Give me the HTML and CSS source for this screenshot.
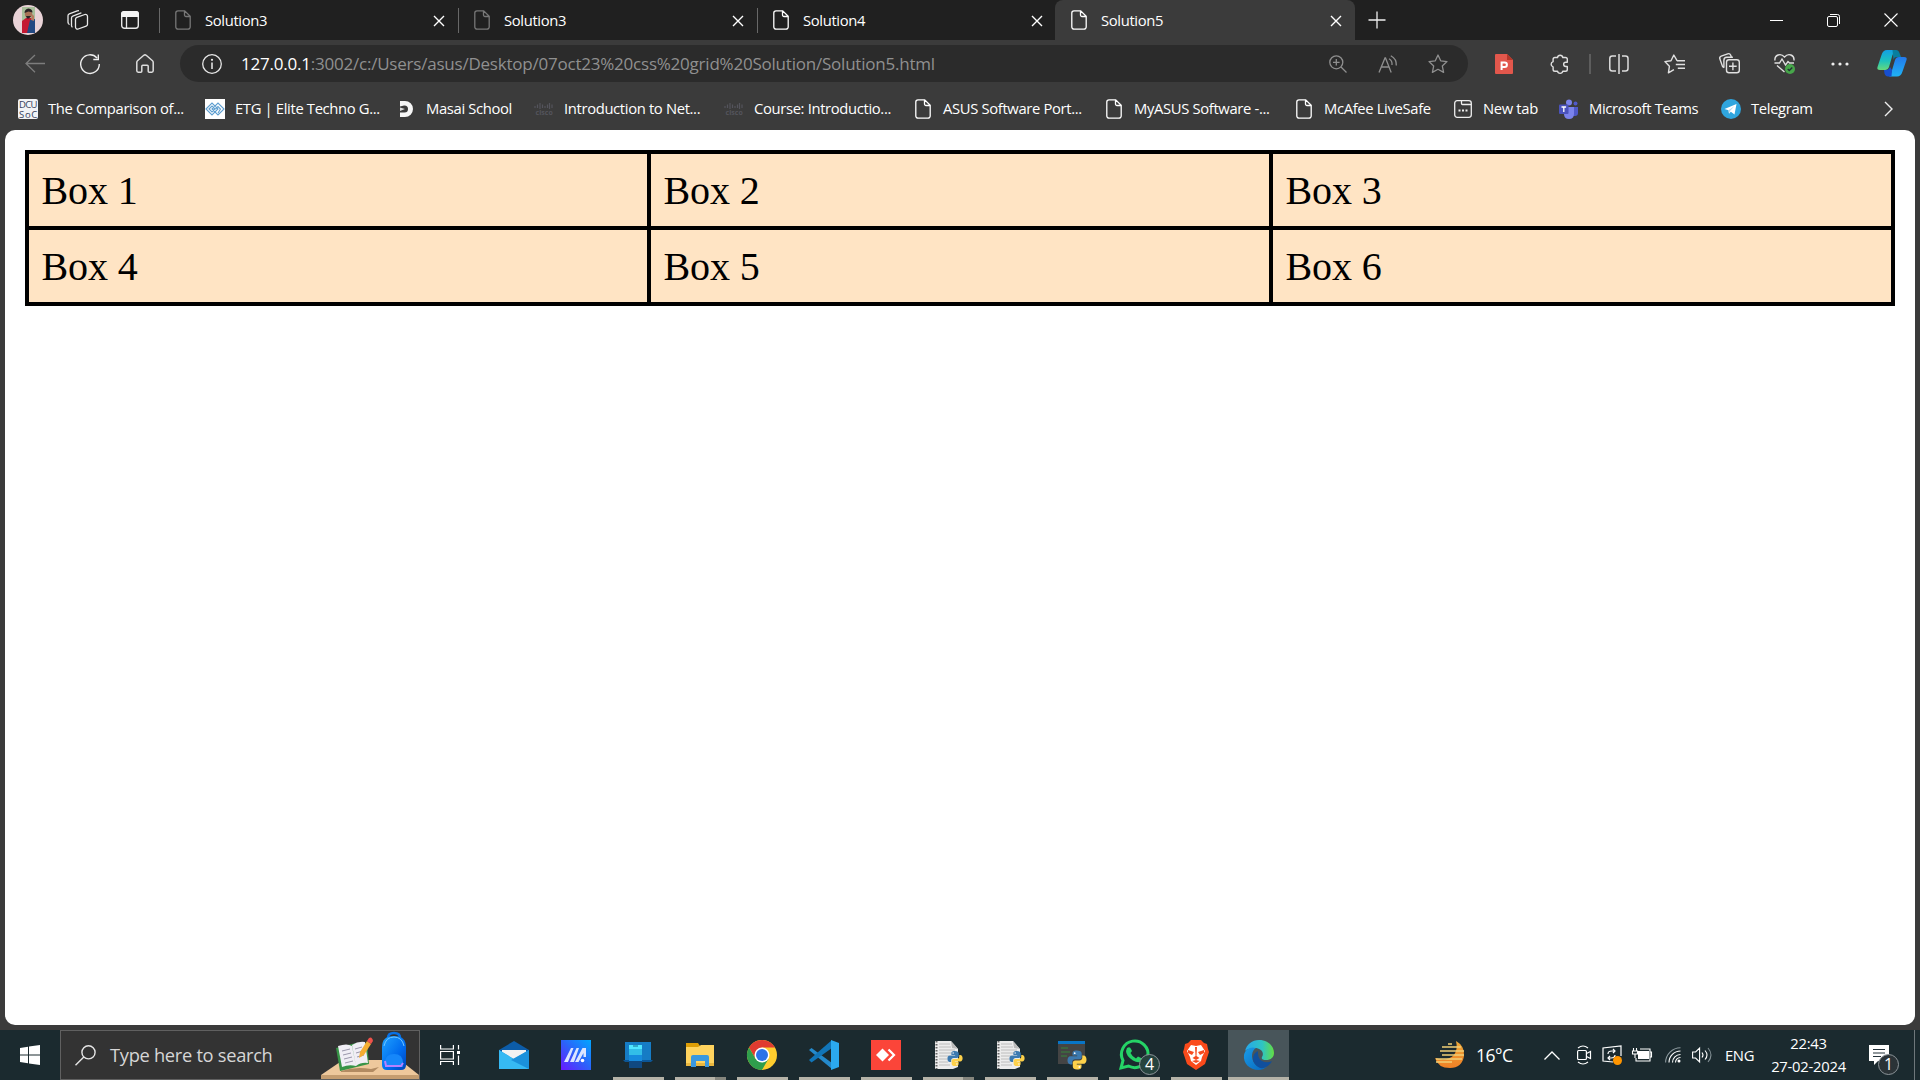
FILE: index.html
```html
<!DOCTYPE html>
<html lang="en">
<head>
<meta charset="utf-8">
<title>Solution5</title>
<link rel="stylesheet" href="styles.css">
</head>
<body>
<svg class="defs" width="0" height="0">
  <defs>
    <symbol id="file" viewBox="0 0 16 20"><path d="M3 .8H9.700L15.200 6.300V17a2.200 2.200 0 0 1-2.200 2.200H3A2.200 2.200 0 0 1 .8 17V3A2.200 2.200 0 0 1 3 .8ZM9.500 1V5a1.500 1.500 0 0 0 1.500 1.500h4" fill="none" stroke="currentColor" stroke-width="1.300"/></symbol>
    <symbol id="close" viewBox="0 0 12 12"><path d="M1 1l10 10M11 1L1 11" stroke="currentColor" stroke-width="1.400"/></symbol>
    <symbol id="cisco" viewBox="0 0 20 20"><path d="M1 7v2M3.500 5.500V9M6 4v6M8.500 5.500V9M11 7v2M13.500 5.500V9M15.500 4v6M18 5.500V9" stroke="#54545c" stroke-width="1.200"/><text x="10" y="16" font-size="7" font-weight="700" fill="#54545c" text-anchor="middle" textLength="17">cisco</text></symbol>
    <symbol id="py" viewBox="0 0 20 20"><path d="M9.800.5c-4 0-4.300 1.700-4.300 3v2h4.700v.8H3.500C1.500 6.300.5 8 .5 10.300s1 4.200 3 4.200h1.700v-2.300c0-1.600 1.300-2.900 2.900-2.900h4.300c1.300 0 2.300-1 2.300-2.300V3.500c0-1.800-1.700-3-4.900-3Z" fill="#3c7ab0"/><path d="M10.200 19.500c4 0 4.300-1.700 4.300-3v-2H9.800v-.8h6.700c2 0 3-1.700 3-4s-1-4.200-3-4.200h-1.200v2.300c0 1.600-1.300 2.700-2.900 2.700H8.100c-1.300 0-2.300 1-2.300 2.300v3.700c0 1.800 1.400 3 4.400 3Z" fill="#fdd14a"/><circle cx="7.700" cy="3.200" r=".9" fill="#fff"/><circle cx="12.400" cy="16.900" r=".9" fill="#fff"/></symbol>
    <symbol id="pyfile" viewBox="0 0 30 30"><path d="M2 1h16l7 8v18l-5 2H2Z" fill="#ececec"/><path d="M18 1l1 7 6 1Z" fill="#bbb"/><path d="M3.500 1v28" stroke="#666" stroke-width="2" stroke-dasharray="1.500 1.500"/><path d="M6 4h11M6 7h12M6 10h16M6 13h16M6 16h10M6 19h8M6 22h9M6 25h11" stroke="#b9b9b9" stroke-width=".9"/><use href="#py" x="14" y="10" width="16" height="17"/></symbol>
    <linearGradient id="asus" x1="0" y1="1" x2="1" y2="0"><stop stop-color="#6a18ff"/><stop offset=".5" stop-color="#2d61fa"/><stop offset="1" stop-color="#00a8ff"/></linearGradient>
    <linearGradient id="bag" x1="0" y1="0" x2="1" y2="1"><stop stop-color="#1fa2ff"/><stop offset=".6" stop-color="#006bee"/><stop offset="1" stop-color="#0043b8"/></linearGradient>
    <linearGradient id="moon" x1="0" y1="0" x2="0" y2="1"><stop stop-color="#eda93a"/><stop offset="1" stop-color="#f08025"/></linearGradient>
    <linearGradient id="edgetop"><stop stop-color="#25a7ed"/><stop offset=".6" stop-color="#2fc4c2"/><stop offset="1" stop-color="#64dd42"/></linearGradient>
    <linearGradient id="edgeleft" x1="0" y1="0" x2="1" y2="1"><stop stop-color="#1a9ce8"/><stop offset="1" stop-color="#0867bd"/></linearGradient>
    <linearGradient id="cop1" x1="0" y1="0" x2="0" y2="1"><stop stop-color="#139fe4"/><stop offset=".55" stop-color="#1dc2bd"/><stop offset="1" stop-color="#66d97b"/></linearGradient>
    <linearGradient id="cop2" x1="0" y1="0" x2="0" y2="1"><stop stop-color="#2379ec"/><stop offset="1" stop-color="#1fb3f5"/></linearGradient>
    <clipPath id="face"><circle cx="15" cy="15" r="15"/></clipPath>
  </defs>
</svg>

<header class="tabstrip">
  <div class="slot avatar"><svg width="30" height="30"><g clip-path="url(#face)"><path d="M0 0h30v30H0Z" fill="#e9d3d7"/><path d="M9 2h13v26H9Z" fill="#a9c09b"/><path d="M9 16l4-3h5l4 2v13H9Z" fill="#c51832"/><path d="M17 15l5-1v14h-8Z" fill="#234a83"/><circle cx="15.500" cy="9" r="3.700" fill="#a87358"/><path d="M11.500 8q0-4 4-4.500 4 .500 4 4l-4-1ZM13 11h5l-2 2.500h-2Z" fill="#2a2325"/><path d="M19 9l2 2v5l-3-1Z" fill="#b57b5f"/></g></svg></div>
  <div class="slot spaces"><svg width="22" height="22" fill="none" stroke="#e8e8e8" stroke-width="1.300"><path d="M8.500 10.200a2 2 0 0 1 1.300-1.800l8-2.900a2 2 0 0 1 2.700 1.900v7.800a2 2 0 0 1-1.300 1.900l-8 2.900a2 2 0 0 1-2.700-1.900ZM5.500 18.200l-.4-.3a2 2 0 0 1-.6-1.400V9a2 2 0 0 1 1.300-1.900l7.700-3 .9-.2M2.500 15.600l-1-1a2 2 0 0 1-.5-1.200V6.800a2 2 0 0 1 1.300-1.900l7.900-3L12 1.600"/></svg></div>
  <div class="slot actions"><svg width="18" height="18"><rect x=".7" y=".7" width="16.600" height="16.600" rx="2.700" fill="none" stroke="#e8e8e8" stroke-width="1.400"/><path d="M3 0h12q3 0 3 3v3H0V3Q0 0 3 0Z" fill="#f3f3f3"/><path d="M5.500 6v11" stroke="#e8e8e8" stroke-width="1.300"/></svg></div>
  <div class="tab dim"><svg class="file"><use href="#file"/></svg><span>Solution3</span><svg class="x"><use href="#close"/></svg></div>
  <div class="tab dim"><svg class="file"><use href="#file"/></svg><span>Solution3</span><svg class="x"><use href="#close"/></svg></div>
  <div class="tab"><svg class="file"><use href="#file"/></svg><span>Solution4</span><svg class="x"><use href="#close"/></svg></div>
  <div class="tab active"><svg class="file"><use href="#file"/></svg><span>Solution5</span><svg class="x"><use href="#close"/></svg></div>
  <div class="slot plus"><svg width="18" height="18"><path d="M9 .5v17M.5 9h17" stroke="#eee" stroke-width="1.300"/></svg></div>
  <div class="controls">
    <div class="slot"><svg width="13" height="13"><path d="M0 6.500h13" stroke="#fff"/></svg></div>
    <div class="slot"><svg width="13" height="13" fill="none" stroke="#fff"><rect x=".5" y="2.500" width="10" height="10" rx="1.500"/><path d="M3 .5h7.500a2 2 0 0 1 2 2V10"/></svg></div>
    <div class="slot"><svg width="14" height="14"><path d="M.5.5l13 13M13.500.5l-13 13" stroke="#fff" stroke-width="1.100"/></svg></div>
  </div>
</header>

<nav class="toolbar">
  <div class="slot nav"><svg width="20" height="20" fill="none" stroke="#7d7d7d" stroke-width="1.300"><path d="M20 9.500H.8M10 1L1 9.500l9 8.700"/></svg></div>
  <div class="slot nav"><svg width="20" height="20" fill="none" stroke="#eee" stroke-width="1.400"><path d="M19.300 10A9.300 9.300 0 1 1 17 4M18.300.5v5h-5"/></svg></div>
  <div class="slot nav"><svg width="18" height="19" fill="none" stroke="#ddd" stroke-width="1.500"><path d="M.8 8.200a2 2 0 0 1 .7-1.500L7.800 1.300a1.900 1.900 0 0 1 2.400 0l6.300 5.400a2 2 0 0 1 .7 1.500v8.600a1.400 1.400 0 0 1-1.400 1.400h-2.600a1 1 0 0 1-1-1v-5a1 1 0 0 0-1-1H6.800a1 1 0 0 0-1 1v5a1 1 0 0 1-1 1H2.200A1.400 1.400 0 0 1 .8 16.800Z"/></svg></div>
  <div class="address">
    <svg width="20" height="20"><circle cx="10" cy="10" r="9.300" fill="none" stroke="#e6e6e6" stroke-width="1.300"/><path d="M10 8.500V15" stroke="#eee" stroke-width="1.500"/><circle cx="10" cy="5.800" r="1.100" fill="#eee"/></svg>
    <div class="url"><b>127.0.0.1</b>:3002/c:/Users/asus/Desktop/07oct23%20css%20grid%20Solution/Solution5.html</div>
    <div class="slot"><svg width="18" height="18" fill="none" stroke="#8f8f8f" stroke-width="1.300"><circle cx="7.300" cy="7.300" r="6.500"/><path d="M12 12l5.500 5.500M7.300 4v6.600M4 7.300h6.600"/></svg></div>
    <div class="slot"><svg width="20" height="18" fill="none" stroke="#8f8f8f" stroke-width="1.300"><path d="M1 17.500L7 3h.5l5.700 14.500M3 12h8.300M11 3.800q3.500 2 3 6.200M12.800.8q6 3.200 5.500 9.700"/></svg></div>
    <div class="slot"><svg width="20" height="20" fill="none" stroke="#8f8f8f" stroke-width="1.300" stroke-linejoin="round"><path d="M10 1l2.700 5.800 6.300.8-4.700 4.300 1.300 6.500L10 15.300l-5.600 3.100 1.300-6.500L1 7.600l6.300-.8Z"/></svg></div>
  </div>
  <div class="slot pdf"><svg width="18" height="20"><path d="M1 0h11l6 6v13q0 1-1 1H1q-1 0-1-1V1Q0 0 1 0Z" fill="#e2574c"/><path d="M12 0l6 6h-6Z" fill="#b53629"/><path d="M6.600 16V8.500h3a2.300 2.300 0 0 1 0 4.600h-3" fill="none" stroke="#fff" stroke-width="2"/></svg></div>
  <div class="slot nav"><svg width="19" height="20" fill="none" stroke="#e0e0e0" stroke-width="1.400" stroke-linejoin="round"><path d="M7.500 3.500a2.700 2.700 0 0 1 5.300 0h2.700q1.800 0 1.800 1.800v2.900h-1.500a2 2 0 0 0 0 4.300h1.500v2.900q0 1.800-1.800 1.800h-2.700a2.700 2.700 0 0 1-5.300 0H4.900q-1.800 0-1.800-1.800v-2.500a2.700 2.700 0 0 1 0-5.200V5.300q0-1.800 1.800-1.800Z"/></svg></div>
  <div class="divider"></div>
  <div class="slot split"><svg width="20" height="20" fill="none" stroke="#ddd" stroke-width="1.500"><path d="M7 2H3.300A2.500 2.500 0 0 0 .8 4.500v10A2.500 2.500 0 0 0 3.300 17H7M13 2h3.500A2.500 2.500 0 0 1 19 4.500v10a2.500 2.500 0 0 1-2.500 2.500H13M10 0v20"/></svg></div>
  <div class="slot nav"><svg width="21" height="20" fill="none" stroke="#e0e0e0" stroke-width="1.400"><path d="M13.200 6.800L9.800 1 7 6.700.9 7.600l4.500 4.700-1 6.600 5.500-3.200M13 6.800h8M11.800 10.500H21M13.800 14.300H21" stroke-linejoin="round"/></svg></div>
  <div class="slot nav"><svg width="21" height="21" fill="none" stroke="#e0e0e0" stroke-width="1.400"><rect x="7.500" y="6.800" width="12.800" height="13" rx="2.500"/><path d="M13.900 9.500v7.700M10 13.300h7.700M5 14.800l-1.400-1.100L.9 6a2.300 2.300 0 0 1 1.300-2.900l6.500-2.300a2.300 2.300 0 0 1 2.900 1.300l.8 2M4.900 14.800V7.300a3 3 0 0 1 3-3h6"/></svg></div>
  <div class="slot nav"><svg width="21" height="21" fill="none" stroke="#e0e0e0" stroke-width="1.400"><path d="M.9 7.500C.5 2 6.500-.5 10.500 4 14.500-.5 20.500 2 20 7.500M.5 10h5l2.500-4 3.500 6 2.500-3.500 1.500 1.500H20M3 12.500l7.500 6.500"/><circle cx="16" cy="16" r="5" fill="#47a64a" stroke="none"/><path d="M13.700 16l1.600 1.500 3-3" stroke="#233"/></svg></div>
  <div class="slot nav"><svg width="18" height="4" fill="#eee"><circle cx="2" cy="2" r="1.600"/><circle cx="9" cy="2" r="1.600"/><circle cx="16" cy="2" r="1.600"/></svg></div>
  <div class="slot copilot"><svg width="30" height="27"><path d="M18 0h-8Q6 0 4.500 5L.5 17Q-.5 20 3 20h5q3 0 4-3l3.500-12Q17 1 20 2Z" fill="url(#cop1)"/><path d="M15.500 0H19q2.500 0 3.500 3l1.500 4h-4q-3 0-3.500 3Z" fill="#087e9e"/><path d="M12 26.500h8q4 0 5.500-5l4-11.500q1-3-2.500-3h-5q-3 0-4 3l-3.500 12q-1 4-2.500 4.500Z" fill="url(#cop2)"/><path d="M14.500 26.500H11q-2.500 0-3.500-3L7 20h2q3 0 4-3l2 3Z" fill="#174fd0"/></svg></div>
</nav>

<nav class="bookmarks">
  <a><svg width="20" height="20"><rect width="20" height="20" rx="2" fill="#f1f3f6"/><g font-size="9.500" fill="#35415c" text-anchor="middle"><text x="10" y="9" textLength="18">DCU</text><text x="10" y="18.500" textLength="18">SoC</text></g></svg><span>The Comparison of...</span></a>
  <a><svg width="20" height="20"><path d="M0 0h20v20H0Z" fill="#fff"/><g fill="none" stroke="#5f9fd0" stroke-width="1.100"><path d="M1 10l6-6 6 6-6 6ZM7 10l6-6 6 6-6 6ZM4 10l3-3 3 3-3 3ZM10.500 10L13 7.500l2.500 2.500L13 14"/></g></svg><span>ETG | Elite Techno G...</span></a>
  <a><svg width="20" height="20"><path d="M4 2h5a8 8 0 0 1 0 16H4v-4.500h4.500a3.500 3.500 0 0 0 0-7H8L4 7.500Z" fill="#f6f6f6"/><path d="M4 8.500l5 1.500-5 2Z" fill="#ddd"/></svg><span>Masai School</span></a>
  <a><svg width="20" height="20"><use href="#cisco"/></svg><span>Introduction to Net...</span></a>
  <a><svg width="20" height="20"><use href="#cisco"/></svg><span>Course: Introductio...</span></a>
  <a><svg width="20" height="20"><use href="#file"/></svg><span>ASUS Software Port...</span></a>
  <a><svg width="20" height="20"><use href="#file"/></svg><span>MyASUS Software -...</span></a>
  <a><svg width="20" height="20"><use href="#file"/></svg><span>McAfee LiveSafe</span></a>
  <a><svg width="20" height="20" fill="none" stroke="#eee" stroke-width="1.300"><rect x="1.700" y="1.700" width="16.600" height="16.600" rx="2.500"/><path d="M8.500 2v2.500q0 1 1 1h8.500"/><path d="M5.500 11.500h2M9 11.500h2M12.500 11.500h2" stroke-width="2"/></svg><span>New tab</span></a>
  <a><svg width="20" height="20"><circle cx="10" cy="3.500" r="3" fill="#7b83eb"/><circle cx="16.500" cy="4.500" r="2" fill="#5059c9"/><path d="M14 8h5v6q0 3-3 3h-2Z" fill="#5059c9"/><path d="M5 8h10v7q0 5-5 5t-5-5Z" fill="#7b83eb"/><rect y="5.500" width="9.500" height="9.500" rx="1" fill="#4b53bc"/><path d="M2.500 8h4.600M4.800 8v5" stroke="#fff" stroke-width="1.300"/></svg><span>Microsoft Teams</span></a>
  <a><svg width="20" height="20"><circle cx="10" cy="10" r="10" fill="#2fa5de"/><path d="M3.500 10L15.500 5l-2 10.500-3.700-2.700-1.800 2-.5-3.600Z" fill="#fff"/><path d="M7.500 11.200L13.500 7 9 12l-1 2.500Z" fill="#b5d7ec"/></svg><span>Telegram</span></a>
  <span class="slot more"><svg width="9" height="16"><path d="M1 1l7 7-7 7" fill="none" stroke="#eee" stroke-width="1.400"/></svg></span>
</nav>

<main class="page">
  <div class="grid">
    <div>Box 1</div><div>Box 2</div><div>Box 3</div>
    <div>Box 4</div><div>Box 5</div><div>Box 6</div>
  </div>
</main>

<footer class="taskbar">
  <div class="slot start"><svg width="20" height="20" fill="#fff"><path d="M0 3l8-1.200v7.700H0ZM9 1.600L20 0v9.500H9ZM0 10.500h8v7.700L0 17ZM9 10.500h11V20L9 18.400Z"/></svg></div>
  <div class="search">
    <svg width="21" height="21" fill="none" stroke="#e6e6e6" stroke-width="1.400"><circle cx="13.500" cy="7.300" r="6.600"/><path d="M8.800 12L.5 20.300"/></svg>
    <span>Type here to search</span>
    <svg class="art" width="98" height="47">
      <path d="M22 28h57l19 15H0Z" fill="#eec89c"/><path d="M0 43h98v4H0Z" fill="#c59d70"/><path d="M20 39q15-5 30-2l8-2-6 5H20Z" fill="#b28b62"/>
      <path d="M15 16l20-5 11 0 2 21-29 7Z" fill="#389447"/><path d="M17 14q9-3 14 0l4 20q-7-2-14 1ZM31 13q6-4 13-3l3 21q-7-1-12 3Z" fill="#f0eef5"/><path d="M21 19l8-2M22 23l8-2M23 27l8-2M24 31l8-2M34 17l7-2M35 21l7-2M36 25l7-2" stroke="#9a97ab"/>
      <path d="M38 26l1-6L46 9l4 3-7 11Z" fill="#f5ad32"/><path d="M46 9l2-3q3-2 4 3l-2 3Z" fill="#ef524b"/>
      <path d="M67 6q0-5 6-5t6 5" fill="none" stroke="#0870e5" stroke-width="2.500"/><path d="M61 15q0-11 12-11t12 11v18q0 5-5 5H66q-5 0-5-5Z" fill="url(#bag)"/><path d="M63 14q2-9 10-9t10 9" fill="none" stroke="#70c7ff"/><path d="M64 31q0-9 9-9t9 9v4H64Z" fill="#1687fa"/><path d="M64 29l1 5h15l2-3" fill="none" stroke="#b780ff" stroke-width="2"/>
    </svg>
  </div>
  <div class="slot view"><svg width="20" height="20" fill="none" stroke="#fff" stroke-width="1.200"><path d="M.6 0v4h12.800V0M.6 20v-3.500h12.800V20M.6 6.500h12.800v7.500H.6ZM18.500 0v4.500M18.500 10.500V20"/><path d="M17 6h3v3h-3Z" fill="#fff" stroke="none"/></svg></div>
  <div class="apps">
    <div class="app"><svg width="30" height="30"><path d="M0 10L15 1l15 9v5H0Z" fill="#0c5ca8"/><path d="M3 10h24v9H3Z" fill="#f2f2f2"/><path d="M0 10l15 9 15-9v19H0Z" fill="#29a8e8"/><path d="M0 10l30 19H0Z" fill="#36b9f3"/><path d="M30 10L12 20l18 9Z" fill="#1b91db"/></svg></div>
    <div class="app"><svg width="30" height="30"><path d="M0 0h30v30H0Z" fill="url(#asus)"/><path d="M3 22L10 8h2.500L7 22ZM9 22L15.500 8H18l-5 14Z" fill="#dbe5ff"/><path d="M14 22L21.500 8H25v9h-2.500v-4l-5 9Z" fill="#dbe5ff"/><circle cx="21.500" cy="20.500" r="1.800" fill="#fff"/></svg></div>
    <div class="app run"><svg width="30" height="30"><path d="M2 2h26v18H2Z" fill="#167cc5"/><path d="M0 20h30l-2 2H2Z" fill="#0c5696"/><path d="M6 5h13v5H6Z" fill="#50e6ff"/><path d="M6 9h13v7H6Z" fill="#32bee8"/><path d="M6 15h13v7H6Z" fill="#168bdd"/><path d="M6 21h13v7H6Z" fill="#104981"/><path d="M10 6h5" stroke="#126b92"/></svg></div>
    <div class="app run multi"><svg width="30" height="30"><path d="M1 3h12l2 3v4H1Z" fill="#dd9d06"/><path d="M1 7h12l3-2h13v21H1Z" fill="#ffd35e"/><path d="M1 23h28v3H1Z" fill="#e9b73f"/><path d="M6 27V17q0-2 2-2h14q2 0 2 2v10h-4v-6h-9v6Z" fill="#3a98df"/></svg></div>
    <div class="app run"><svg width="30" height="30"><circle cx="15" cy="15" r="15" fill="#ffcd2e"/><path d="M2 7.500A15 15 0 0 1 28 7.500H15L8.500 18.700Z" fill="#e03b30"/><path d="M2 7.500A15 15 0 0 0 15 30l6.500-11.300H15L8.500 18.700Z" fill="#2f9e4c"/><circle cx="15" cy="15" r="7.500" fill="#fff"/><circle cx="15" cy="15" r="6" fill="#2c73e8"/></svg></div>
    <div class="app run"><svg width="30" height="30"><path d="M0 10l2.500-2L23 23v6Z" fill="#2489cb"/><path d="M0 20l2.500 2.500L23 8V0Z" fill="#1175b8"/><path d="M22 0l8 3v24l-8 3V0Z" fill="#2ba9ef"/></svg></div>
    <div class="app run"><svg width="30" height="30"><path d="M0 0h30v30H0Z" fill="#fb4539"/><path d="M5 15l6.500-6.500L18 15l-6.500 6.500Z" fill="#fff"/><path d="M17.500 9.500L23 15l-5.500 5.500" fill="none" stroke="#fff" stroke-width="2.200"/></svg></div>
    <div class="app run multi"><svg width="30" height="30"><use href="#pyfile"/></svg></div>
    <div class="app run"><svg width="30" height="30"><use href="#pyfile"/></svg></div>
    <div class="app run"><svg width="30" height="30"><path d="M1 1h27v23H1Z" fill="#444"/><path d="M1 1h27v3H1Z" fill="#0875c7"/><path d="M4 8h7M4 12h9M4 16h6" stroke="#37843b"/><use href="#py" x="10" y="10" width="20" height="20"/></svg></div>
    <div class="app run"><svg width="30" height="30"><path d="M2 28l2-7.500A13.300 13.300 0 1 1 9.500 26Z" fill="none" stroke="#25d366" stroke-width="3"/><path d="M8 8q3-2 4 1l1 2-1.500 2q2 4 5.500 5.500l2-2 4 2q1 1-1 3-3 2-8-1Q7 16 7 11Z" fill="#25d366"/></svg><span class="badge green">4</span></div>
    <div class="app run"><svg width="30" height="30"><path d="M10 0h10l3 3 3 1 1 5 1 3-4 12-9 6-9-6L2 12l1-3 1-5 3-1Z" fill="#fb4a1b"/><path d="M15 6l5-1 4 6-3 6-1 4-5 4-5-4-1-4-3-6 4-6Z" fill="#fff"/><path d="M7 10l6 2-2 3-4-2ZM23 10l-6 2 2 3 4-2ZM14 7h2l-.5 9 3 2-3.500 2-3.500-2 3-2ZM11 21l4 2 4-2-4-1Z" fill="#f64b20"/></svg></div>
    <div class="app run current"><svg width="30" height="30"><path d="M1 11C3 4 8 0 15 0c9 0 15 6 15 13 0 5-4 7-8 7-3 0-5-1-4-3 3-5-2-9-7-9-5 0-9 2-10 3Z" fill="url(#edgetop)"/><path d="M0 15C1 9 7 6 12 8c-4 2-6 10-1 16 4 4 9 4 12 3-3 2-6 3-8 3C5 30-1 23 0 15Z" fill="url(#edgeleft)"/><path d="M14 11c-7 3-7 13 2 17 5 1 10-3 12-7-6 3-15 1-14-10Z" fill="#104f9d"/></svg></div>
  </div>
  <div class="weather"><svg width="30" height="28"><path d="M21 0q9 5 8 15-2 12-14 12Q3 27 0 17q12 4 19-3 4-6 2-14Z" fill="url(#moon)"/><path d="M7 6h19M13 3h4M5 10h24M7 14h22M1 18h26M1 21h16" stroke="#f1d077" stroke-width="1.700"/></svg><span>16°C</span></div>
  <div class="tray">
    <svg width="16" height="9"><path d="M.5 8.500L8 1l7.500 7.500" fill="none" stroke="#fff" stroke-width="1.300"/></svg>
    <svg width="16" height="20" fill="none" stroke="#fff" stroke-width="1.200"><rect x="1.600" y="5.500" width="8.800" height="9" rx="1"/><path d="M10.500 8.500l4-2v7l-4-2M2 3q5-4 10 0M2 17q5 4 10 0"/></svg>
    <svg width="20" height="20" fill="none" stroke="#fff" stroke-width="1.200"><path d="M11 17l-10-1V3l18-2v10"/><path d="M6 9q0-3 4-3h3m-2-2 2 2-2 2M13 10q0 3-4 3H6m2-2-2 2 2 2"/><circle cx="15.500" cy="15.500" r="4.500" fill="#ff9500" stroke="none"/></svg>
    <svg width="20" height="14"><path d="M6 3h11v8H6Z" fill="#fff"/><path d="M4 10v3h14V1H8M18.500 4h1v5h-1M1.500 0v3M4.500 0v3M.5 3h5v3h-5ZM3 6v4" fill="none" stroke="#fff" stroke-width="1.100"/></svg>
    <svg width="16" height="16" fill="none" stroke="#fff" stroke-width="1.100"><path d="M.6 15.500A15 15 0 0 1 15.500.7" stroke="#8c999e"/><path d="M4 15.500A11.500 11.500 0 0 1 15.500 4M7.500 15.500a8 8 0 0 1 8-8M10.500 15.500a5 5 0 0 1 5-5"/><circle cx="14" cy="14" r="1.500" fill="#fff" stroke="none"/></svg>
    <svg width="21" height="18" fill="none" stroke="#fff" stroke-width="1.100"><path d="M.6 6h3l4-4v14l-4-4h-3ZM10 6.500q2 2.500 0 5M13 4.500q4 4.500 0 9"/><path d="M16 2q6 7 0 14" stroke="#839095"/></svg>
  </div>
  <div class="lang">ENG</div>
  <div class="clock"><span>22:43</span><span>27-02-2024</span></div>
  <div class="notice"><svg width="20" height="20"><path d="M0 0h20v16H9l-4 4v-4H0Z" fill="#fff"/><path d="M4 4.500h12M4 8h12M4 11.500h8" stroke="#24323a" stroke-width="1.200"/></svg><span class="badge">1</span></div>
  <div class="peek"></div>
</footer>
</body>
</html>
```
FILE: styles.css
```css
* { box-sizing: border-box; }
body {
  margin: 0;
  width: 1920px;
  height: 1080px;
  overflow: hidden;
  display: flex;
  flex-direction: column;
  background: #3b3b3b;
  color: #fff;
  font: 14.8px/20px "Open Sans", "Noto Sans", sans-serif;
  letter-spacing: -0.35px;
}
svg { display: block; flex: none; overflow: visible; }
.defs { position: absolute; }
.slot { display: flex; align-items: center; justify-content: center; flex: none; }

.tabstrip { height: 40px; flex: none; display: flex; background: #202020; }
.avatar { width: 56px; }
.spaces { width: 44px; }
.actions { width: 59px; }
.tab {
  width: 299px;
  display: flex;
  align-items: center;
  padding: 0 13px 0 16px;
  background: linear-gradient(#686868, #686868) 0 8px / 1px 25px no-repeat;
}
.tab .file { width: 16px; height: 20px; }
.tab.dim .file { color: #777; }
.tab span { margin: -1px auto 0 14px; }
.tab .x { width: 12px; height: 12px; margin-top: 1px; }
.tab.active {
  width: 300px;
  margin-left: -1px;
  background: #3b3b3b;
  border-radius: 8px 8px 0 0;
}
.plus { width: 44px; }
.controls { display: flex; margin-left: auto; }
.controls .slot { width: 57.500px; }

.toolbar { height: 47px; flex: none; display: flex; align-items: center; padding-left: 7px; }
.nav { width: 55px; }
.address {
  width: 1288px;
  height: 37px;
  margin-left: 8px;
  padding: 0 5px 0 22px;
  display: flex;
  align-items: center;
  border-radius: 19px;
  background: #2b2b2b;
}
.url { margin: 0 auto 0 19px; color: #909090; font-size: 17px; letter-spacing: -0.22px; }
.url b { color: #fff; font-weight: 400; }
.address .slot { width: 50px; }
.pdf { width: 72px; }
.toolbar .pdf + .nav { margin-left: -8px; }
.divider { width: 2px; height: 20px; background: #5d5d5d; margin-left: 2px; }
.split { width: 56px; }
.copilot { width: 50px; }

.bookmarks {
  height: 43px;
  flex: none;
  padding-left: 18px;
  display: grid;
  grid-template-columns: 187px 191px 138px 190px 189px 191px 190px 159px 106px 162px 154px 26px;
  align-items: center;
}
.bookmarks a { display: flex; gap: 10px; white-space: nowrap; }
.bookmarks a span { margin-top: -1px; }

.page {
  height: 895px;
  flex: none;
  margin: 0 5px;
  padding: 20px;
  background: #fff;
  border-radius: 10px;
}
.grid {
  display: grid;
  grid-template-columns: repeat(3, 1fr);
  grid-auto-rows: 72px;
  gap: 4px;
  padding: 4px;
  background: #000;
  color: #000;
  font: 40px/46px "Liberation Serif", serif;
  letter-spacing: -0.1px;
}
.grid div { padding: 13.5px 12.5px 12.5px; background: #ffe4c4; }

.taskbar { height: 50px; flex: none; margin-top: 5px; display: flex; background: #1b2a2f; }
.start { width: 60px; }
.search {
  width: 360px;
  display: flex;
  align-items: center;
  padding-left: 14px;
  background: #333;
  border: 1px solid #606060;
  color: #d6d6d6;
  font-size: 18.3px;
  letter-spacing: -0.3px;
}
.search span { margin-left: 14px; }
.search .art { margin: 1px 0 0 auto; }
.view { width: 60px; }
.apps { display: flex; padding-left: 3px; }
.app { width: 62px; display: flex; justify-content: center; padding-top: 10px; position: relative; }
.run { background: linear-gradient(#b5b3a8, #b5b3a8) 6px 47px / 51px 3px no-repeat; }
.multi { background: linear-gradient(90deg, #b5b3a8 40px, #85867e 40px) 6px 47px / 51px 3px no-repeat; }
.current { width: 61px; margin-left: 1px; background: linear-gradient(#48555a 47px, #b5b3a8 47px); }
.badge {
  position: absolute;
  left: 36px;
  top: 24px;
  width: 21px;
  height: 21px;
  border: 1px solid #8c9499;
  border-radius: 50%;
  background: #2b3337;
  text-align: center;
  font-size: 16px;
  line-height: 19px;
}
.badge.green { background: #26433e; }
.weather { display: flex; align-items: center; margin-left: 146px; width: 109px; gap: 11px; font-size: 17.5px; letter-spacing: -0.5px; }
.tray { display: flex; align-items: center; gap: 13px; width: 181px; }
.tray svg:nth-child(2) { margin-left: 3px; }
.tray svg:nth-child(3) { margin-left: -3px; }
.tray svg:nth-child(4) { margin-left: -3px; }
.tray svg:nth-child(6) { margin-left: -2px; }
.lang { width: 30px; line-height: 50px; }
.clock { width: 107px; display: flex; flex-direction: column; align-items: center; padding-top: 2px; line-height: 23px; letter-spacing: -0.25px; }
.notice { width: 52px; padding: 15px 0 0 7px; position: relative; }
.notice .badge { left: 16px; }
.peek { width: 1px; background: #6e777b; }
```
